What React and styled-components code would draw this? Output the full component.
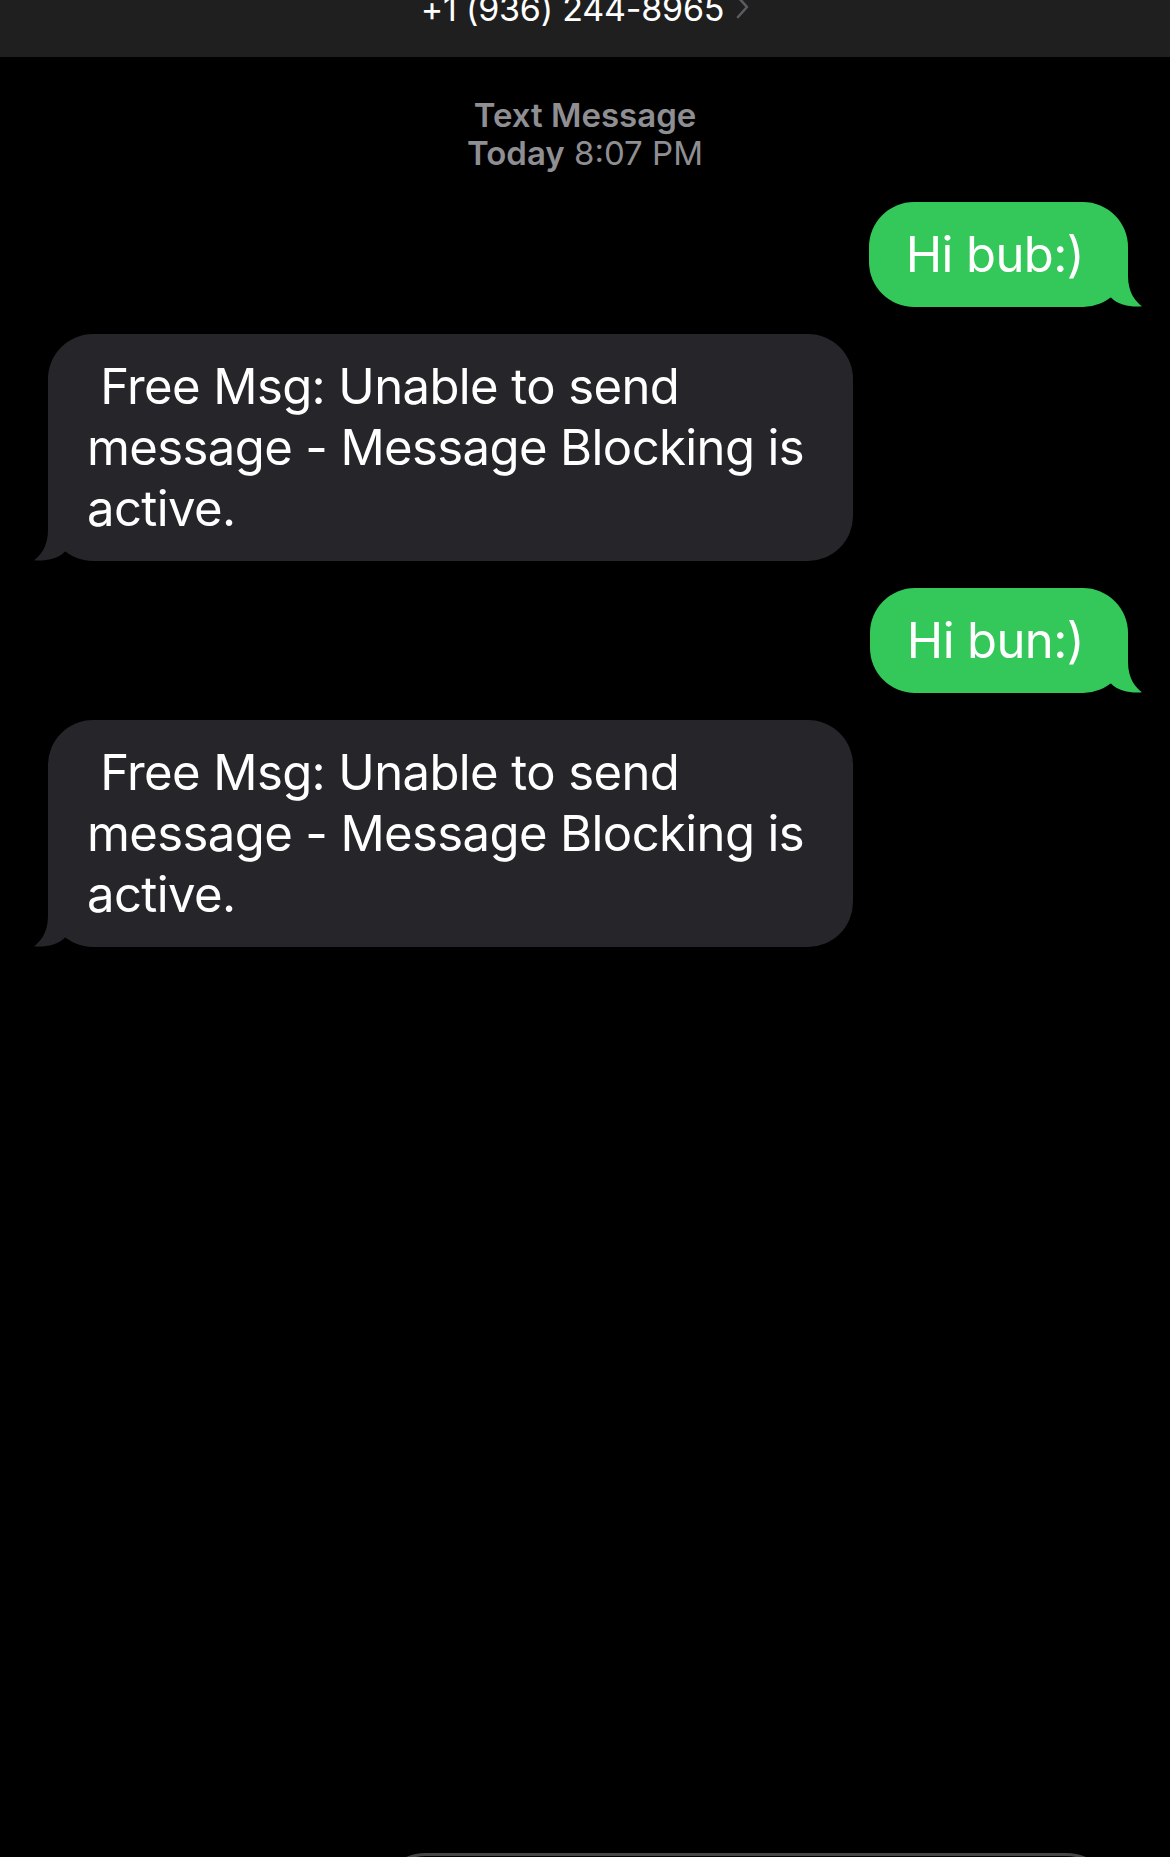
import React from "react";
import styled, { createGlobalStyle } from "styled-components";

const GlobalStyle = createGlobalStyle`
  html, body {
    margin: 0;
    padding: 0;
    background: #000;
    overflow: hidden;
  }
  body {
    font-family: Inter, "Noto Sans", "Liberation Sans", sans-serif;
    -webkit-font-smoothing: antialiased;
  }
`;

const Screen = styled.div`
  display: flex;
  flex-direction: column;
  height: 100vh;
  background: #000;
  color: #fff;
`;

const NavBar = styled.header`
  flex: 0 0 57px;
  display: flex;
  justify-content: center;
  align-items: flex-end;
  padding-bottom: 28px;
  box-sizing: border-box;
  background: #1f1f1f;
  overflow: hidden;
`;

const ContactName = styled.div`
  display: flex;
  align-items: center;
  gap: 12px;
  font-size: 34px;
  line-height: 40px;
  font-weight: 400;
  letter-spacing: -0.2px;
  color: #fff;
`;

const Chevron = styled.svg`
  width: 13px;
  height: 24px;
  margin-top: -4px;
`;

const Thread = styled.main`
  flex: 1;
  min-height: 0;
  display: flex;
  flex-direction: column;
  padding: 39px 42px 0 48px;
  box-sizing: border-box;
`;

const Stamp = styled.div`
  text-align: center;
  color: #8e8e93;
  font-size: 33px;
  line-height: 38px;
  font-weight: 400;
  margin-left: -6px;
  margin-bottom: 30px;

  b {
    font-weight: 600;
  }
`;

const Row = styled.div`
  display: flex;
  justify-content: ${(p) => (p.$mine ? "flex-end" : "flex-start")};
  margin-top: ${(p) => (p.$first ? 0 : 27)}px;
`;

const Bubble = styled.div`
  position: relative;
  box-sizing: border-box;
  max-width: 805px;
  padding: 22px ${(p) => (p.$mine ? 44 : 36)}px 22px ${(p) => (p.$mine ? 37 : 39)}px;
  border-radius: 45px;
  background: ${(p) => p.$color};
  color: #fff;
  font-size: 49px;
  line-height: 61px;
  letter-spacing: -0.6px;
  white-space: pre-wrap;
`;

const BubbleText = styled.span`
  position: relative;
`;

const Tail = styled.svg`
  position: absolute;
  bottom: 0;
  height: 45px;
  ${(p) =>
    p.$mine
      ? `right: -${p.$reach}px;`
      : `left: -${p.$reach}px; transform: scaleX(-1);`}
`;

const Composer = styled.footer`
  flex: none;
  height: 4px;
  min-height: 0;
  display: flex;
  align-items: flex-start;
  padding: 0 54px 0 376px;
  overflow: visible;
`;

const Field = styled.div`
  flex: 1;
  flex-shrink: 0;
  height: 100px;
  box-sizing: border-box;
  border: 3px solid #47474a;
  border-radius: 52px;
`;

// The tail hugs the bubble's lower corner: it leaves the side edge,
// flares out to a tip on the baseline, then curls back into the corner.
function BubbleTail({ mine, color }) {
  const reach = 14;
  const w = 34 + reach;
  const d = [
    "M34 0",
    "L34 14",
    `C34 31 ${w - 6} 40 ${w} 44.2`,
    `C${w - 8} 45.6 24 43.5 17 35.5`,
    "L0 30 L0 0 Z",
  ].join(" ");
  return (
    <Tail $mine={mine} $reach={reach} width={w} viewBox={`0 0 ${w} 45`}>
      <path d={d} fill={color} />
    </Tail>
  );
}

function Message({ mine, text, first }) {
  const color = mine ? "#34c759" : "#262529";
  return (
    <Row $mine={mine} $first={first}>
      <Bubble $mine={mine} $color={color}>
        <BubbleTail mine={mine} color={color} />
        <BubbleText>{text}</BubbleText>
      </Bubble>
    </Row>
  );
}

const notice = " Free Msg: Unable to send message - Message Blocking is active.";

const messages = [
  { id: 1, mine: true, text: "Hi bub:)" },
  { id: 2, mine: false, text: notice },
  { id: 3, mine: true, text: "Hi bun:)" },
  { id: 4, mine: false, text: notice },
];

export default function App() {
  return (
    <>
      <GlobalStyle />
      <Screen>
        <NavBar>
          <ContactName>
            <span>+1 (936) 244-8965</span>
            <Chevron viewBox="0 0 13 24">
              <path
                d="M2 2 L11 12 L2 22"
                fill="none"
                stroke="#5c5c60"
                strokeWidth="2.6"
                strokeLinecap="round"
                strokeLinejoin="round"
              />
            </Chevron>
          </ContactName>
        </NavBar>
        <Thread>
          <Stamp>
            <b>Text Message</b>
            <br />
            <b>Today</b> 8:07 PM
          </Stamp>
          {messages.map((m, i) => (
            <Message key={m.id} mine={m.mine} text={m.text} first={i === 0} />
          ))}
        </Thread>
        <Composer>
          <Field aria-label="Text Message" />
        </Composer>
      </Screen>
    </>
  );
}
